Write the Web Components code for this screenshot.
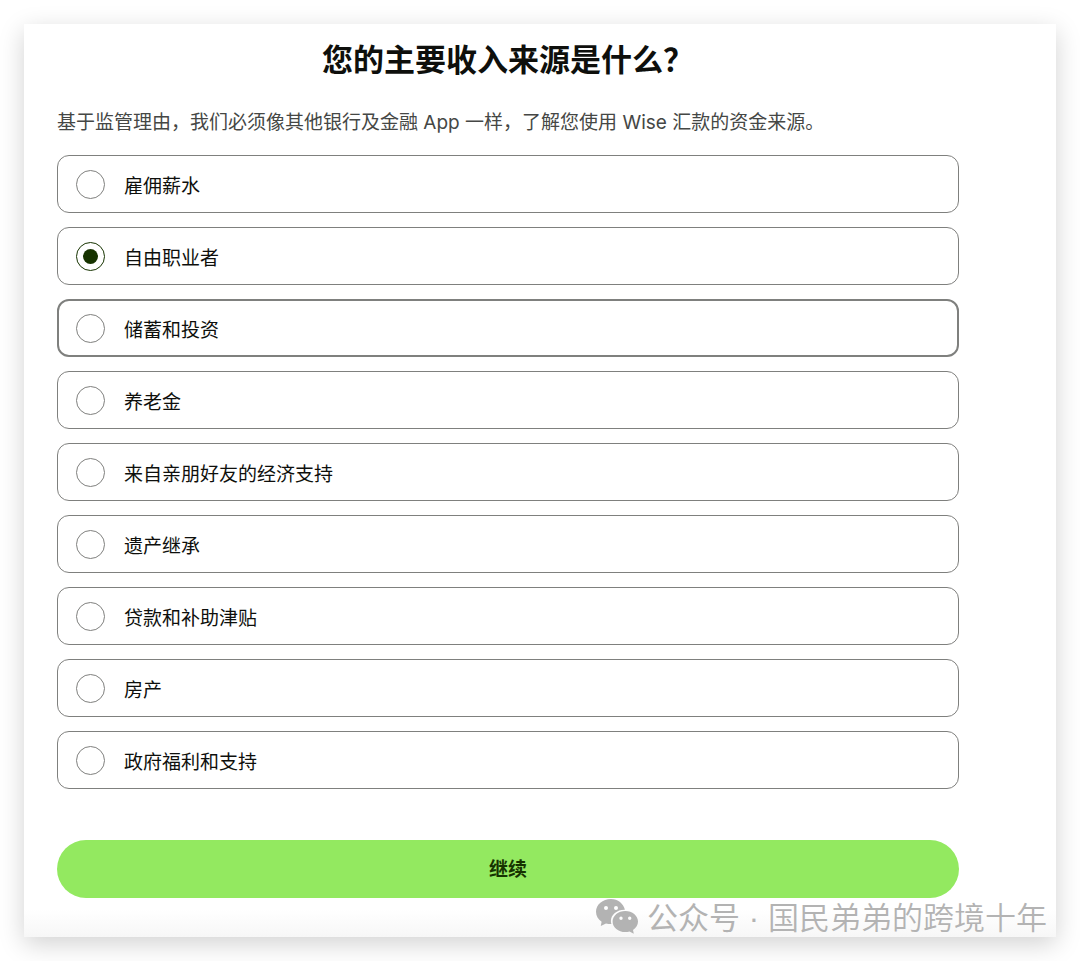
<!DOCTYPE html>
<html lang="zh-CN">
<head>
<meta charset="utf-8">
<meta name="viewport" content="width=device-width, initial-scale=1">
<title>您的主要收入来源是什么？</title>
<style>
  body {
    margin: 0;
    padding: 24px;
    background: #fff;
    font-family: Inter, "Noto Sans CJK SC", sans-serif;
    color: #0e0f0c;
  }
</style>
</head>
<body>

<page-card>
  <question-header>
    <span slot="title">您的主要收入来源是什么？</span>
    基于监管理由，我们必须像其他银行及金融 App 一样，了解您使用 Wise 汇款的资金来源。
  </question-header>
  <option-list>
    <radio-option value="salary">雇佣薪水</radio-option>
    <radio-option value="freelance" checked>自由职业者</radio-option>
    <radio-option value="savings" active>储蓄和投资</radio-option>
    <radio-option value="pension">养老金</radio-option>
    <radio-option value="family">来自亲朋好友的经济支持</radio-option>
    <radio-option value="inheritance">遗产继承</radio-option>
    <radio-option value="loans">贷款和补助津贴</radio-option>
    <radio-option value="property">房产</radio-option>
    <radio-option value="benefits">政府福利和支持</radio-option>
  </option-list>
  <primary-button>继续</primary-button>
  <account-mark slot="mark"><span slot="label">公众号 ·</span>国民弟弟的跨境十年</account-mark>
</page-card>

<script>
// Creates the open shadow root of an element from its markup
function render(el, html) {
  const template = document.createElement('template');
  template.innerHTML = html;
  el.attachShadow({ mode: 'open' }).appendChild(template.content);
}

// === Card with the shadow around the whole form ===
class PageCard extends HTMLElement {
  constructor() {
    super();
    render(this, `
      <style>
        :host {
          display: block;
          position: relative;
          background: linear-gradient(to top, #f7f7f7, #fff 28px);
          box-shadow: 0 7px 24px rgba(0, 0, 0, 0.18);
        }
        main {
          display: flex;
          flex-direction: column;
          padding: 14px 97px 39px 33px;
        }
        /* The account mark lies over the bottom right corner */
        slot[name="mark"] {
          display: block;
          position: absolute;
          right: 9px;
          bottom: 0;
        }
      </style>
      <main><slot></slot></main>
      <slot name="mark"></slot>
    `);
  }
}

// === Title and explanation ===
class QuestionHeader extends HTMLElement {
  constructor() {
    super();
    render(this, `
      <style>
        :host { display: block; }
        h1 {
          margin: 0;
          font-size: 31px;
          line-height: 44px;
          font-weight: 600;
          text-align: center;
        }
        p {
          margin: 26px 0 17px;
          font-size: 19px;
          line-height: 30px;
          color: #454745;
        }
      </style>
      <h1><slot name="title"></slot></h1>
      <p><slot></slot></p>
    `);
  }
}

// === One choice: a radio and its label ===
class RadioOption extends HTMLElement {
  static observedAttributes = ['checked'];

  constructor() {
    super();
    render(this, `
      <style>
        :host {
          --border: #7f807e;
          --selected: #163300;
          display: block;
        }
        label {
          display: flex;
          align-items: center;
          gap: 19px;
          box-sizing: border-box;
          height: 58px;
          padding: 0 18px;
          border: 1px solid var(--border);
          border-radius: 12px;
          font-size: 19px;
          line-height: 28px;
          cursor: pointer;
        }
        :host([active]) label {
          border-width: 2px;
          padding: 0 17px;
        }
        input {
          appearance: none;
          display: grid;
          place-items: center;
          flex: none;
          box-sizing: border-box;
          width: 29px;
          height: 29px;
          margin: 0;
          border: 1px solid var(--border);
          border-radius: 50%;
          background: #fff;
        }
        input:checked { border-color: var(--selected); }
        input:checked::before {
          content: "";
          width: 15px;
          height: 15px;
          border-radius: 50%;
          background: var(--selected);
        }
        span { padding-top: 5px; }
      </style>
      <label><input type="radio" name="source"><span><slot></slot></span></label>
    `);
    this.input = this.shadowRoot.querySelector('input');
    this.input.addEventListener('change', () => {
      this.setAttribute('checked', '');
      this.dispatchEvent(new CustomEvent('select-option', { bubbles: true }));
    });
  }

  connectedCallback() {
    this.input.value = this.getAttribute('value');
  }

  attributeChangedCallback() {
    this.input.checked = this.hasAttribute('checked');
  }
}

// === The list keeps a single option checked ===
class OptionList extends HTMLElement {
  constructor() {
    super();
    render(this, `
      <style>
        :host {
          display: flex;
          flex-direction: column;
          gap: 14px;
        }
      </style>
      <slot></slot>
    `);
    this.addEventListener('select-option', (e) => {
      this.querySelectorAll('radio-option').forEach((option) => {
        if (option !== e.target) option.removeAttribute('checked');
      });
    });
  }

  connectedCallback() {
    this.setAttribute('role', 'radiogroup');
  }
}

// === Green pill button ===
class PrimaryButton extends HTMLElement {
  constructor() {
    super();
    render(this, `
      <style>
        :host {
          display: block;
          margin-top: 51px;
        }
        button {
          display: block;
          width: 100%;
          height: 58px;
          padding: 0 0 3px;
          border: 0;
          border-radius: 29px;
          background: #93e960;
          color: #163300;
          font: inherit;
          font-size: 19px;
          font-weight: 600;
          cursor: pointer;
        }
      </style>
      <button type="button"><slot></slot></button>
    `);
  }
}

// === Account mark with the two chat bubbles ===
class AccountMark extends HTMLElement {
  constructor() {
    super();
    render(this, `
      <style>
        :host {
          display: flex;
          align-items: flex-end;
          gap: 9px;
          color: #b3b3b3;
          font-family: "Liberation Sans", "Noto Sans CJK SC", sans-serif;
          font-size: 31px;
          line-height: 36px;
          font-weight: 350;
          white-space: nowrap;
        }
        svg {
          flex: none;
          padding-bottom: 2px;
        }
        .label { font-weight: 400; }
      </style>
      <svg width="42" height="36" viewBox="0 0 42 36" fill="currentColor" aria-hidden="true">
        <path fill-rule="evenodd" d="M15 0C6.700 0 0 5.600 0 12.800c0 4.100 2.200 7.600 5.600 10L4.800 27l5.200-2.600c1.700.5 3.300.7 5.400.7-.3-1-.5-2-.5-3.100 0-6.400 6.300-11.400 14-11.200C27.500 4.700 21.900 0 15 0zM10 6.900a2 2 0 1 1 0 4 2 2 0 0 1 0-4zm10 0a2 2 0 1 1 0 4 2 2 0 0 1 0-4z"/>
        <path fill-rule="evenodd" d="M29.300 11.900c-7 0-12.700 4.700-12.700 10.600s5.700 10.600 12.700 10.600c1.500 0 2.900-.2 4.200-.6l4.300 2.200-.8-3.700c3.100-1.900 5-5 5-8.500 0-5.900-5.700-10.600-12.700-10.600zM25 17.500a1.700 1.700 0 1 1 0 3.400 1.700 1.700 0 0 1 0-3.400zm8.700 0a1.700 1.700 0 1 1 0 3.400 1.700 1.700 0 0 1 0-3.400z"/>
      </svg>
      <span class="label"><slot name="label"></slot></span>
      <span><slot></slot></span>
    `);
  }
}

customElements.define('page-card', PageCard);
customElements.define('question-header', QuestionHeader);
customElements.define('radio-option', RadioOption);
customElements.define('option-list', OptionList);
customElements.define('primary-button', PrimaryButton);
customElements.define('account-mark', AccountMark);
</script>
</body>
</html>
